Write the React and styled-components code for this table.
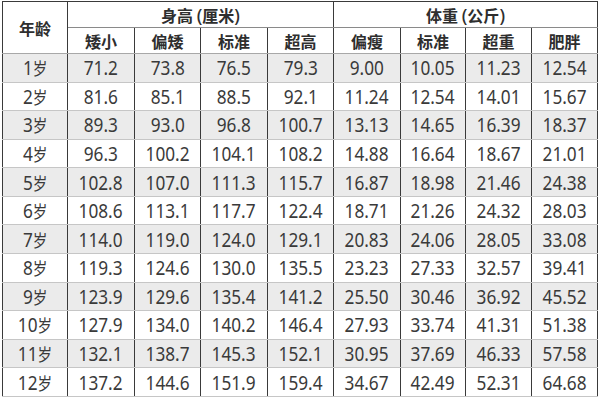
import styled, { createGlobalStyle } from "styled-components";

const GlobalStyle = createGlobalStyle`
  body {
    margin: 0;
    background: #ffffff;
    font-family: "Noto Sans", "Noto Sans CJK SC", sans-serif;
  }
`;

const rows = [
    ["1岁", "71.2", "73.8", "76.5", "79.3", "9.00", "10.05", "11.23", "12.54"],
    ["2岁", "81.6", "85.1", "88.5", "92.1", "11.24", "12.54", "14.01", "15.67"],
    ["3岁", "89.3", "93.0", "96.8", "100.7", "13.13", "14.65", "16.39", "18.37"],
    ["4岁", "96.3", "100.2", "104.1", "108.2", "14.88", "16.64", "18.67", "21.01"],
    ["5岁", "102.8", "107.0", "111.3", "115.7", "16.87", "18.98", "21.46", "24.38"],
    ["6岁", "108.6", "113.1", "117.7", "122.4", "18.71", "21.26", "24.32", "28.03"],
    ["7岁", "114.0", "119.0", "124.0", "129.1", "20.83", "24.06", "28.05", "33.08"],
    ["8岁", "119.3", "124.6", "130.0", "135.5", "23.23", "27.33", "32.57", "39.41"],
    ["9岁", "123.9", "129.6", "135.4", "141.2", "25.50", "30.46", "36.92", "45.52"],
    ["10岁", "127.9", "134.0", "140.2", "146.4", "27.93", "33.74", "41.31", "51.38"],
    ["11岁", "132.1", "138.7", "145.3", "152.1", "30.95", "37.69", "46.33", "57.58"],
    ["12岁", "137.2", "144.6", "151.9", "159.4", "34.67", "42.49", "52.31", "64.68"],
];

const widths = [65, 67, 66, 67, 66, 67, 65, 66, 66];

const App = () => {
    return (
        <>
            <GlobalStyle />
            <Page>
                <Table>
                    <colgroup>
                        {widths.map((w, i) => (
                            <col key={i} style={{ width: w }} />
                        ))}
                    </colgroup>
                    <thead>
                        <HeadRow>
                            <HeadCell rowSpan={2} $bottom>年龄</HeadCell>
                            <HeadCell colSpan={4}>身高 <Paren>(</Paren>厘米<Paren>)</Paren></HeadCell>
                            <HeadCell colSpan={4}>体重 <Paren>(</Paren>公斤<Paren>)</Paren></HeadCell>
                        </HeadRow>
                        <HeadRow>
                            <HeadCell $bottom>矮小</HeadCell>
                            <HeadCell $bottom>偏矮</HeadCell>
                            <HeadCell $bottom>标准</HeadCell>
                            <HeadCell $bottom>超高</HeadCell>
                            <HeadCell $bottom>偏瘦</HeadCell>
                            <HeadCell $bottom>标准</HeadCell>
                            <HeadCell $bottom>超重</HeadCell>
                            <HeadCell $bottom>肥胖</HeadCell>
                        </HeadRow>
                    </thead>
                    <tbody>
                        {rows.map((row, index) => (
                            <DataRow key={row[0]} $alt={index % 2 === 0}>
                                <Cell>
                                    <Narrow>
                                        {row[0].replace("岁", "")}
                                        <Unit>岁</Unit>
                                    </Narrow>
                                </Cell>
                                {row.slice(1).map((value, i) => (
                                    <Cell key={i}>
                                        <Narrow>{value}</Narrow>
                                    </Cell>
                                ))}
                            </DataRow>
                        ))}
                    </tbody>
                </Table>
            </Page>
        </>
    );
};

export default App;

const Page = styled.div`
  width: 600px;
  height: 400px;
  padding: 1px 0 0 2px;
  box-sizing: border-box;
  overflow: hidden;
`;

const Table = styled.table`
  width: 595px;
  border-collapse: collapse;
  table-layout: fixed;
  border: 1px solid #3a3a3a;
  color: #333333;
`;

const HeadRow = styled.tr`
  height: 26px;
  background: #ffffff;
`;

const HeadCell = styled.th`
  padding: 0;
  font-family: "Noto Sans CJK SC", sans-serif;
  font-size: 16px;
  font-weight: 700;
  line-height: 24px;
  text-align: center;
  border-left: 1px solid #3a3a3a;
  border-right: 1px solid #3a3a3a;
  border-bottom: 1px solid ${(p) => (p.$bottom ? "#a8a8a8" : "#8a8a8a")};
  color: #2e2e2e;
`;

const Paren = styled.span`
  font-family: "Noto Sans", sans-serif;
  font-weight: 500;
  font-size: 18px;
`;

const DataRow = styled.tr`
  height: 28.58px;
  background: ${(p) => (p.$alt ? "#ebebeb" : "#ffffff")};
`;

const Cell = styled.td`
  padding: 0;
  font-size: 20px;
  line-height: 27px;
  text-align: center;
  border-left: 1px solid #3a3a3a;
  border-right: 1px solid #3a3a3a;
  border-bottom: 1px solid #c6c6c6;
  color: #3a3a3a;
  white-space: nowrap;
`;

const Narrow = styled.span`
  display: inline-block;
  transform: scaleX(0.86);
  font-weight: 400;
`;

const Unit = styled.span`
  font-family: "Noto Sans CJK SC", sans-serif;
  font-size: 17px;
`;
